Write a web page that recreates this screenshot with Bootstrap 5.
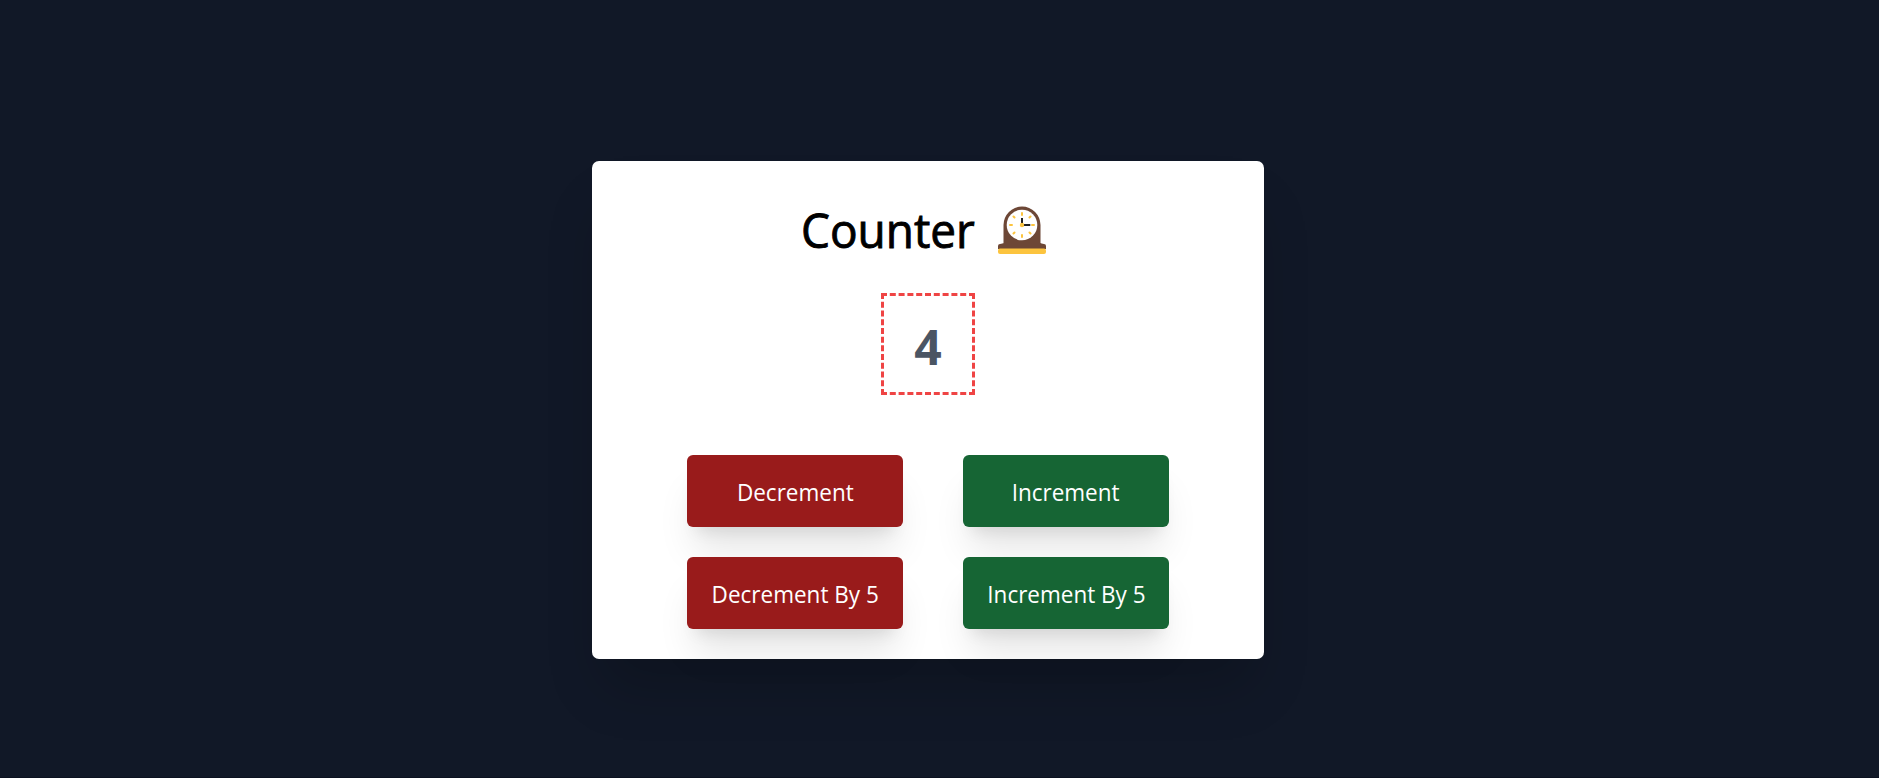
<!DOCTYPE html>
<html lang="en">
<head>
<meta charset="utf-8">
<meta name="viewport" content="width=device-width, initial-scale=1">
<title>Counter</title>
<link href="https://cdn.jsdelivr.net/npm/bootstrap@5.3.0/dist/css/bootstrap.min.css" rel="stylesheet">
<style>
body{background:#111827;font-family:"Open Sans","Noto Sans",sans-serif;color:#000}
.page{height:778px;padding-top:161px;border-bottom:1px solid #0b1120}
.counter-card{width:672px;height:498px;margin-left:592px;border:0;border-radius:7px;padding-top:33px;box-shadow:0 37.5px 54px -12px rgba(0,0,0,.2)}
.title{font-size:47.500px;font-weight:400;line-height:72px;height:72px;margin:0 0 27px 209px;gap:24px}
.title span{width:173px;white-space:nowrap;-webkit-text-stroke:.9px #000;transform:scaleX(.967);transform-origin:0 50%}
.clock{width:48px;height:48px;margin-top:0}
.value{width:94px;height:102px;margin-left:289px;border:3px dashed #ef4444;color:#4b5563;font-size:48px;font-weight:700;line-height:1;padding-top:5px}
.buttons{display:grid;grid-template-columns:216px 206px;column-gap:60px;row-gap:30px;margin:60px 0 0 95px}
.buttons .btn{height:72px;padding:2px 0 0;border:0;border-radius:6px;color:#fff;font-size:24px;line-height:36px;white-space:nowrap;box-shadow:0 30px 37.5px -7.5px rgba(0,0,0,.1),0 12px 15px -9px rgba(0,0,0,.1)}
.buttons span{display:inline-block;transform:scaleX(.937)}
.btn-down{background:#991b1b}
.btn-up{background:#166534}
</style>
</head>
<body>
<main class="page">
<div class="card counter-card">
<h1 class="title d-flex align-items-center"><span>Counter</span>
<svg class="clock" viewBox="0 0 48 48" aria-hidden="true">
<path fill="#6d4736" d="M5.500 38V19a18.500 18.500 0 0 1 37 0V37Q43 37.500 46 38a2 2 0 0 1 2 2v3H0V40a2 2 0 0 1 2-2q3-.5 3.500-1z"/>
<rect y="42.500" width="48" height="5.500" rx="2" fill="#fcc43e"/>
<circle cx="24" cy="19" r="15.300" fill="#fff"/>
<g stroke="#fcc43e" stroke-width="2" stroke-linecap="round"><path d="M24 7v2M24 29v2M12 19h2M34 19h2M15.500 10.500l1 1M31.500 26.500l1 1M15.500 27.500l1-1M31.500 11.500l1-1"/></g>
<path d="M24 19v-7M24 19h8.300" stroke="#212121" stroke-width="2"/>
<circle cx="24" cy="19" r="2.200" fill="#fcc43e"/>
</svg></h1>
<div class="value d-flex align-items-center justify-content-center"><span>4</span></div>
<div class="buttons">
<button class="btn btn-down" type="button"><span>Decrement</span></button>
<button class="btn btn-up" type="button"><span>Increment</span></button>
<button class="btn btn-down" type="button"><span>Decrement By 5</span></button>
<button class="btn btn-up" type="button"><span>Increment By 5</span></button>
</div>
</div>
</main>
<script src="https://cdn.jsdelivr.net/npm/bootstrap@5.3.0/dist/js/bootstrap.bundle.min.js"></script>
</body>
</html>
